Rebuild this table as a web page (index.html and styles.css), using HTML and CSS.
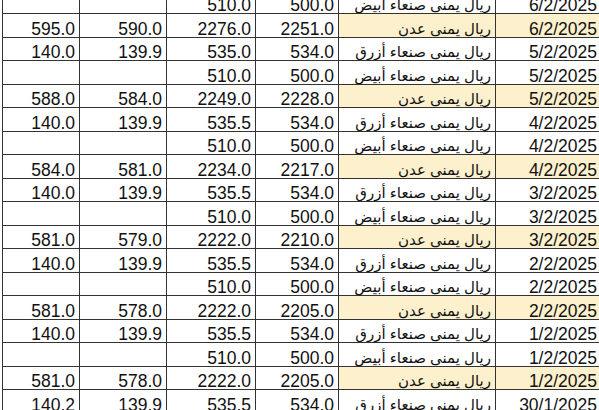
FILE: index.html
```html
<!DOCTYPE html>
<html lang="ar">
<head>
<meta charset="utf-8">
<link rel="stylesheet" href="styles.css">
<title>أسعار الصرف</title>
</head>
<body>
<div class="sheet">
<table class="grid">
<colgroup>
<col class="c1"><col class="c2"><col class="c3"><col class="c4"><col class="c5"><col class="c6">
</colgroup>
<tbody>
<tr><td></td><td></td><td>510.0</td><td>500.0</td><td class="name" dir="rtl">ريال يمني صنعاء أبيض</td><td>6/2/2025</td></tr>
<tr class="aden"><td>595.0</td><td>590.0</td><td>2276.0</td><td>2251.0</td><td class="name" dir="rtl">ريال يمني عدن</td><td>6/2/2025</td></tr>
<tr><td>140.0</td><td>139.9</td><td>535.0</td><td>534.0</td><td class="name" dir="rtl">ريال يمني صنعاء أزرق</td><td>5/2/2025</td></tr>
<tr><td></td><td></td><td>510.0</td><td>500.0</td><td class="name" dir="rtl">ريال يمني صنعاء أبيض</td><td>5/2/2025</td></tr>
<tr class="aden"><td>588.0</td><td>584.0</td><td>2249.0</td><td>2228.0</td><td class="name" dir="rtl">ريال يمني عدن</td><td>5/2/2025</td></tr>
<tr><td>140.0</td><td>139.9</td><td>535.5</td><td>534.0</td><td class="name" dir="rtl">ريال يمني صنعاء أزرق</td><td>4/2/2025</td></tr>
<tr><td></td><td></td><td>510.0</td><td>500.0</td><td class="name" dir="rtl">ريال يمني صنعاء أبيض</td><td>4/2/2025</td></tr>
<tr class="aden"><td>584.0</td><td>581.0</td><td>2234.0</td><td>2217.0</td><td class="name" dir="rtl">ريال يمني عدن</td><td>4/2/2025</td></tr>
<tr><td>140.0</td><td>139.9</td><td>535.5</td><td>534.0</td><td class="name" dir="rtl">ريال يمني صنعاء أزرق</td><td>3/2/2025</td></tr>
<tr><td></td><td></td><td>510.0</td><td>500.0</td><td class="name" dir="rtl">ريال يمني صنعاء أبيض</td><td>3/2/2025</td></tr>
<tr class="aden"><td>581.0</td><td>579.0</td><td>2222.0</td><td>2210.0</td><td class="name" dir="rtl">ريال يمني عدن</td><td>3/2/2025</td></tr>
<tr><td>140.0</td><td>139.9</td><td>535.5</td><td>534.0</td><td class="name" dir="rtl">ريال يمني صنعاء أزرق</td><td>2/2/2025</td></tr>
<tr><td></td><td></td><td>510.0</td><td>500.0</td><td class="name" dir="rtl">ريال يمني صنعاء أبيض</td><td>2/2/2025</td></tr>
<tr class="aden"><td>581.0</td><td>578.0</td><td>2222.0</td><td>2205.0</td><td class="name" dir="rtl">ريال يمني عدن</td><td>2/2/2025</td></tr>
<tr><td>140.0</td><td>139.9</td><td>535.5</td><td>534.0</td><td class="name" dir="rtl">ريال يمني صنعاء أزرق</td><td>1/2/2025</td></tr>
<tr><td></td><td></td><td>510.0</td><td>500.0</td><td class="name" dir="rtl">ريال يمني صنعاء أبيض</td><td>1/2/2025</td></tr>
<tr class="aden"><td>581.0</td><td>578.0</td><td>2222.0</td><td>2205.0</td><td class="name" dir="rtl">ريال يمني عدن</td><td>1/2/2025</td></tr>
<tr><td>140.2</td><td>139.9</td><td>535.5</td><td>534.0</td><td class="name" dir="rtl">ريال يمني صنعاء أزرق</td><td>30/1/2025</td></tr>
</tbody>
</table>
</div>
</body>
</html>
```

FILE: styles.css
```css
html, body {
  margin: 0;
  padding: 0;
  background: #ffffff;
}
.sheet {
  width: 599px;
  height: 410px;
  overflow: hidden;
}
.grid {
  margin-top: -9.5px;
  margin-left: 2px;
  width: 598px;
  table-layout: fixed;
  border-collapse: separate;
  border-spacing: 0;
  border-left: 1px solid #333333;
  font-family: "Liberation Sans", "DejaVu Sans", sans-serif;
  font-size: 17.5px;
  color: #111111;
}
.c1 { width: 77px; }
.c2 { width: 87px; }
.c3 { width: 89px; }
.c4 { width: 83px; }
.c5 { width: 157px; }
.c6 { width: 105px; }
.grid tr { height: 23.5px; }
.grid td {
  box-sizing: border-box;
  height: 23.5px;
  padding: 0 4px 0 4px;
  border-right: 1px solid #333333;
  border-bottom: 1px solid #333333;
  text-align: right;
  vertical-align: bottom;
  line-height: 16px;
  white-space: nowrap;
  overflow: hidden;
}
.grid td:last-child { padding-right: 3px; }
.grid td.name {
  text-align: right;
  font-size: 15px;
}
.aden td:nth-child(5),
.aden td:nth-child(6) {
  background: #fdf0cc;
}
```
